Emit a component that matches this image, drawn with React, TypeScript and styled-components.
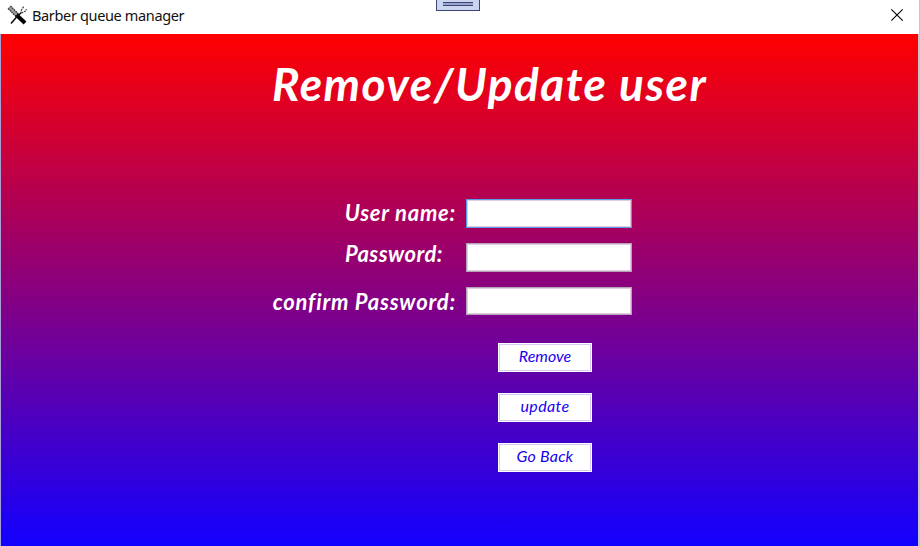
import React from "react";
import styled, { createGlobalStyle } from "styled-components";

const GlobalStyle = createGlobalStyle`
  * { box-sizing: border-box; }
  html, body { margin: 0; overflow: hidden; background: #fff; }
`;

const Window = styled.div`
  width: 920px;
  height: 546px;
  display: grid;
  grid-template-rows: 34px 512px;
  background: #fff;
`;

const TitleBar = styled.header`
  position: relative;
  display: flex;
  align-items: flex-start;
  padding: 5px 0 0 7px;
  background: #fff;
  border-right: 1px solid #c6c6c6;
`;

const Caption = styled.span`
  flex: 1;
  margin: -1px 0 0 5px;
  font: 14.5px/22px "Noto Sans", "Open Sans", sans-serif;
  letter-spacing: -0.35px;
  color: #111;
  white-space: nowrap;
`;

const CloseButton = styled.button`
  width: 14px;
  height: 14px;
  margin: 3px 15px 0 0;
  padding: 0;
  border: 0;
  background: none;
  svg { display: block; }
`;

const DockHandle = styled.div`
  position: absolute;
  top: 0;
  left: 436px;
  width: 44px;
  height: 11px;
  padding: 2px 6px;
  background: #ccd5f0;
  border: 1px solid #3c4574;
  border-top: 0;
`;

const Grip = styled.div`
  height: 4px;
  background: #98a5ce;
  border: solid #3c4574;
  border-width: 1px 0;
`;

const Surface = styled.main`
  display: flex;
  flex-direction: column;
  background: linear-gradient(#ff0000, #1200ff) padding-box;
  border-left: 1px solid #a9a0d8;
  border-right: 2px solid #c6c6c6;
`;

const Script = styled.span<{ $size: number; $spacing?: number; $weight?: number }>`
  font-family: Lato, "Liberation Sans", sans-serif;
  font-style: italic;
  font-size: ${(p) => p.$size}px;
  font-weight: ${(p) => p.$weight ?? 700};
  letter-spacing: ${(p) => p.$spacing ?? 0}px;
  line-height: 1;
  white-space: nowrap;
`;

const Heading = styled.h1`
  height: 165px;
  margin: 0;
  padding: 27px 0 0 271px;
  color: #fff;
`;

const Form = styled.form`
  display: grid;
  grid-template-columns: 455px 166px;
  column-gap: 10px;
  grid-template-rows: 29px 29px 28px;
  row-gap: 15px;
`;

const Label = styled.label<{ $shift?: number; $drop?: number }>`
  justify-self: end;
  padding-top: ${(p) => p.$drop ?? 0}px;
  margin-right: ${(p) => p.$shift ?? 0}px;
  color: #fff;
  line-height: 1;
`;

const Field = styled.input<{ $active?: boolean }>`
  width: 166px;
  height: 100%;
  padding: 0 4px;
  background: #fff;
  border: 1px solid ${(p) => (p.$active ? "#569de5" : "#b5a4b8")};
  box-shadow: inset 0 0 0 1px #e4cde1;
  outline: 0;
`;

const Actions = styled.div`
  display: flex;
  flex-direction: column;
  gap: 21px;
  margin: 28px 0 0 497px;
`;

const ActionButton = styled.button`
  width: 94px;
  height: 29px;
  padding: 0 0 4px;
  display: flex;
  align-items: center;
  justify-content: center;
  border: 1px solid #fff;
  background: #fff;
  box-shadow: inset 0 0 0 1px #d8caf0;
  color: #1a00ee;
`;

const ToolsIcon = () => (
  <svg width="20" height="20" viewBox="0 0 20 20" fill="none">
    <path d="M2 2l9 9" stroke="#999" strokeWidth="3.6" />
    <path d="M1 3.5l8 8M3.5 1l8 8" stroke="#222" strokeWidth="1.2" strokeDasharray="1.6 .8" />
    <path d="M9.5 10l8.5 8" stroke="#000" strokeWidth="4" />
    <path d="M4 18.5l6-7 4-3.5" stroke="#111" strokeWidth="1.6" />
    <path d="M13.5 8.5l1-3.5 2.5-4M14.5 8l4-2 1-2" stroke="#444" strokeWidth="1.2" strokeDasharray="2 .8" />
  </svg>
);

const App = () => (
  <>
    <GlobalStyle />
    <Window>
      <TitleBar>
        <ToolsIcon />
        <Caption>Barber queue manager</Caption>
        <DockHandle><Grip /></DockHandle>
        <CloseButton aria-label="Close">
          <svg width="14" height="14" viewBox="0 0 14 14">
            <path d="M1.3 1.3l11.4 11.4M12.7 1.3L1.3 12.7" stroke="#000" strokeWidth="1.1" />
          </svg>
        </CloseButton>
      </TitleBar>
      <Surface>
        <Heading><Script $size={46} $spacing={1.5}>Remove/Update user</Script></Heading>
        <Form>
          <Label $drop={3}><Script $size={22} $spacing={0.75}>User name:</Script></Label>
          <Field $active />
          <Label $shift={13}><Script $size={22} $spacing={0.45}>Password:</Script></Label>
          <Field />
          <Label $drop={4}><Script $size={22} $spacing={0.8}>confirm Password:</Script></Label>
          <Field />
        </Form>
        <Actions>
          <ActionButton><Script $size={16} $weight={400}>Remove</Script></ActionButton>
          <ActionButton><Script $size={16} $weight={400} $spacing={0.4}>update</Script></ActionButton>
          <ActionButton><Script $size={16} $weight={400} $spacing={0.2}>Go Back</Script></ActionButton>
        </Actions>
      </Surface>
    </Window>
  </>
);

export default App;
